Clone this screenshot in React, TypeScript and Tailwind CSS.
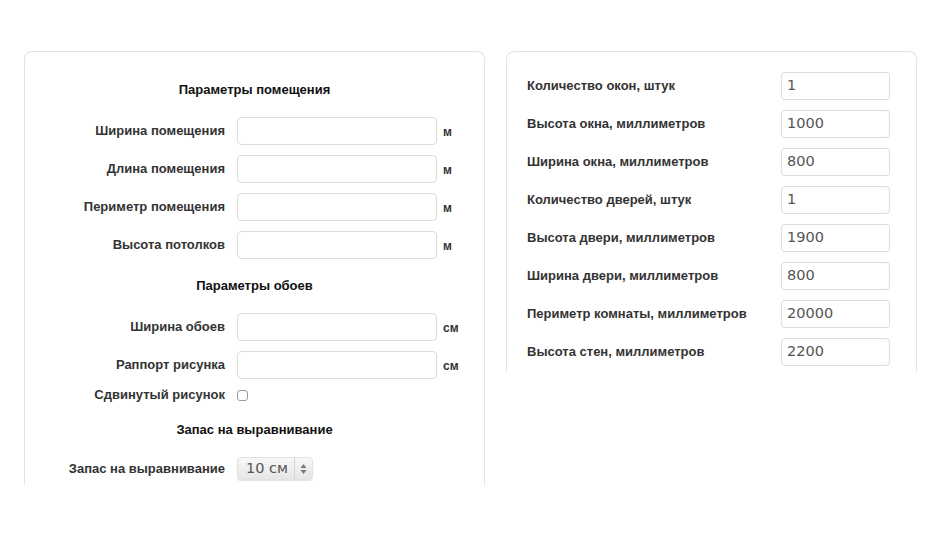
import React from "react";

const labelFont = "font-['Liberation_Sans',Arial,sans-serif]";

function LeftRow({ label, unit }: { label: string; unit: string }) {
  return (
    <div className="flex h-[28px] items-center">
      <div className={`w-[200px] text-right text-[13px] font-bold text-[#333] ${labelFont}`}>{label}</div>
      <div className="ml-[12px] h-[28px] w-[200px] rounded-[4px] border border-[#dcdcdc] bg-white" />
      <div className={`ml-[6px] mt-[2px] text-[12px] font-bold text-[#333] ${labelFont}`}>{unit}</div>
    </div>
  );
}

function Heading({ children }: { children: React.ReactNode }) {
  return (
    <div className={`h-[18px] text-center text-[13px] font-bold leading-[18px] text-[#111] ${labelFont}`}>{children}</div>
  );
}

function RightRow({ label, value }: { label: string; value: string }) {
  return (
    <div className="flex h-[28px] items-center">
      <div className={`w-[254px] text-[13px] font-bold text-[#333] ${labelFont}`}>{label}</div>
      <div className="flex h-[28px] w-[109px] items-center rounded-[4px] border border-[#dcdcdc] bg-white pl-[5px] font-['DejaVu_Sans',sans-serif] text-[14.5px] text-[#555]">
        {value}
      </div>
    </div>
  );
}

export default function App() {
  return (
    <div className="min-h-[542px] w-[943px] bg-white">
      <div className="flex gap-[21px] pl-[24px] pt-[51px]">
        <div className="h-[434px] w-[461px] rounded-t-[8px] border border-b-0 border-[#e3e3e3] pt-[29px]">
          <Heading>Параметры помещения</Heading>
          <div className="mt-[18px] flex flex-col gap-[10px]">
            <LeftRow label="Ширина помещения" unit="м" />
            <LeftRow label="Длина помещения" unit="м" />
            <LeftRow label="Периметр помещения" unit="м" />
            <LeftRow label="Высота потолков" unit="м" />
          </div>
          <div className="mt-[18px]">
            <Heading>Параметры обоев</Heading>
          </div>
          <div className="mt-[18px] flex flex-col gap-[10px]">
            <LeftRow label="Ширина обоев" unit="см" />
            <LeftRow label="Раппорт рисунка" unit="см" />
          </div>
          <div className="mt-[7px] flex h-[18px] items-center">
            <div className={`w-[200px] text-right text-[13px] font-bold text-[#333] ${labelFont}`}>Сдвинутый рисунок</div>
            <div className="ml-[12px] h-[11px] w-[11px] rounded-[3px] border border-[#9a9a9a] bg-white" />
          </div>
          <div className="mt-[17px]">
            <Heading>Запас на выравнивание</Heading>
          </div>
          <div className="mt-[18px] flex h-[23px] items-center">
            <div className={`w-[200px] text-right text-[13px] font-bold text-[#333] ${labelFont}`}>Запас на выравнивание</div>
            <div className="ml-[12px] flex h-[23px] w-[76px] items-center rounded-[4px] border border-[#e2e2e2] bg-gradient-to-b from-[#f7f7f7] to-[#e6e6e6] shadow-[0_1px_1px_rgba(0,0,0,0.12)]">
              <div className="w-[56px] pl-[8px] font-['DejaVu_Sans',sans-serif] text-[14.5px] text-[#555]">10 см</div>
              <div className="h-[23px] w-px bg-[#d6d6d6]" />
              <div className="flex flex-1 items-center justify-center">
                <svg width="7" height="12" viewBox="0 0 7 12">
                  <path d="M3.5 1 L6.5 5 L0.5 5 Z" fill="#777" />
                  <path d="M3.5 11 L6.5 7 L0.5 7 Z" fill="#777" />
                </svg>
              </div>
            </div>
          </div>
        </div>
        <div className="h-[321px] w-[411px] rounded-t-[8px] border border-b-0 border-[#e3e3e3] pl-[20px] pt-[20px]">
          <div className="flex flex-col gap-[10px]">
            <RightRow label="Количество окон, штук" value="1" />
            <RightRow label="Высота окна, миллиметров" value="1000" />
            <RightRow label="Ширина окна, миллиметров" value="800" />
            <RightRow label="Количество дверей, штук" value="1" />
            <RightRow label="Высота двери, миллиметров" value="1900" />
            <RightRow label="Ширина двери, миллиметров" value="800" />
            <RightRow label="Периметр комнаты, миллиметров" value="20000" />
            <RightRow label="Высота стен, миллиметров" value="2200" />
          </div>
        </div>
      </div>
    </div>
  );
}
